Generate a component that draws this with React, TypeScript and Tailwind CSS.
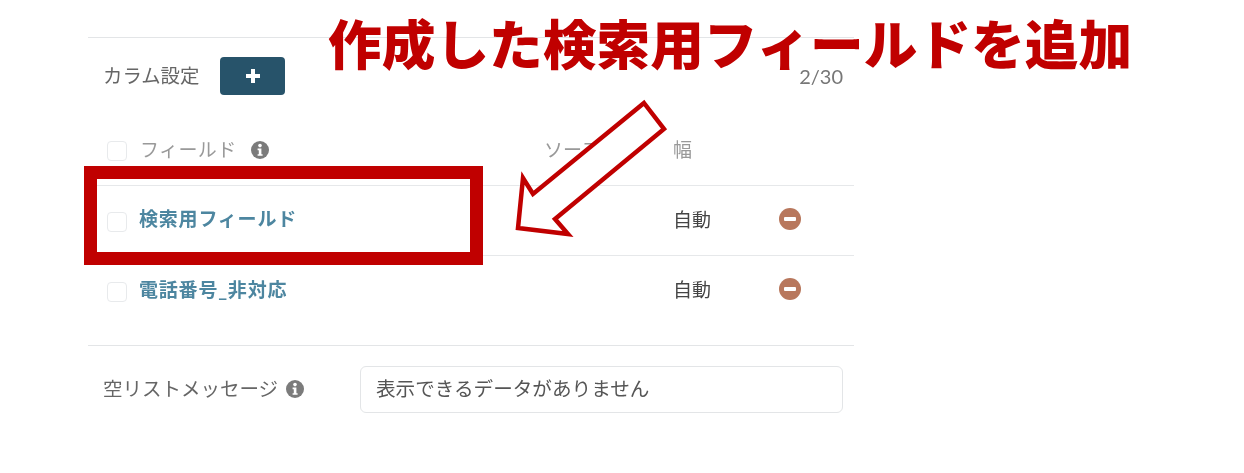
import React from "react";

const Info = ({ className }: { className: string }) => (
  <svg viewBox="0 0 18 18" className={className} fill="none">
    <circle cx="9" cy="9" r="9" fill="#7b7b7b" />
    <circle cx="9" cy="4.6" r="1.8" fill="#fff" />
    <path d="M6.6 7.6h3.8v5.6h1.2v1.6H6.6v-1.6h1.2V9.2H6.6z" fill="#fff" />
  </svg>
);

const Minus = () => (
  <span className="flex h-[22px] w-[22px] items-center justify-center rounded-full bg-[#b8775c]">
    <span className="h-[4px] w-[12px] rounded-[1px] bg-white" />
  </span>
);

const Check = () => <span className="mt-[2px] h-[20px] w-[20px] shrink-0 rounded-[4px] border border-[#e8eaec] bg-white" />;

const Row = ({ name, textClass }: { name: string; textClass: string }) => (
  <div className="flex h-[70px] items-center border-t border-[#e6e8ea]">
    <div className="flex w-[585px] items-center pl-[19px]">
      <Check />
      <span className={textClass}>{name}</span>
    </div>
    <span className="-mt-[1px] text-[19px] text-[#444]">自動</span>
    <span className="ml-[68px] -mt-[3px]">
      <Minus />
    </span>
  </div>
);

export default function App() {
  return (
    <div className="relative h-[473px] w-[1244px] overflow-hidden bg-white pl-[88px] pt-[37px] blur-[0.5px] font-['Lato','Noto_Sans_CJK_JP',sans-serif]">
      <div className="w-[766px] border-t border-[#e3e5e7]">
        <div className="flex h-[77px] items-center pl-[15px] pr-[11px]">
          <span className="-mt-[1px] text-[19.4px] text-[#666]">カラム設定</span>
          <button className="ml-[21px] -mt-[2px] flex h-[38px] w-[65px] items-center justify-center rounded-[4px] bg-[#27536a] text-white">
            <svg viewBox="0 0 16 16" className="h-[16px] w-[16px]" fill="none">
              <path d="M8 1v14M1 8h14" stroke="#fff" strokeWidth="4" />
            </svg>
          </button>
          <span className="ml-auto -mt-[2px] text-[20px] text-[#777]">2/30</span>
        </div>
        <div className="flex h-[70px] items-center">
          <div className="flex w-[456px] items-center pl-[19px]">
            <Check />
            <span className="ml-[13px] text-[19px] tracking-[0.4px] text-[#999]">フィールド</span>
            <Info className="ml-[14px] h-[18px] w-[18px]" />
          </div>
          <span className="w-[129px] text-[19px] text-[#999]">ソース</span>
          <span className="text-[19px] text-[#999]">幅</span>
        </div>
        <Row name="検索用フィールド" textClass="ml-[12px] -mt-[2px] text-[19px] font-bold tracking-[0.8px] text-[#4d86a0]" />
        <Row name="電話番号_非対応" textClass="ml-[12px] text-[19px] font-bold tracking-[0.8px] text-[#4d86a0]" />
        <div className="mt-[20px] flex h-[87px] items-center border-t border-[#e3e5e7] pl-[15px] pr-[11px]">
          <span className="w-[257px] shrink-0 text-[19.5px] text-[#666]">
            <span className="inline-flex items-center">
              空リストメッセージ
              <Info className="ml-[8px] h-[18px] w-[18px]" />
            </span>
          </span>
          <div className="flex h-[47px] flex-1 items-center rounded-[6px] border border-[#e3e5e7] px-[15px] text-[19.6px] text-[#555]">
            表示できるデータがありません
          </div>
        </div>
      </div>

      <div className="absolute left-[84px] top-[166px] h-[99px] w-[399px] border-[13px] border-[#c00000]" />
      <svg className="absolute left-0 top-0 h-[473px] w-[1244px]" viewBox="0 0 1244 473" fill="none">
        <polygon
          points="644,103 664,129 555,219 568,234 518,228 523,178 533,194"
          fill="#fff"
          stroke="#c00000"
          strokeWidth="4.5"
          strokeLinejoin="miter"
        />
      </svg>
      <div className="absolute left-[328px] top-[6px] whitespace-nowrap text-[53.7px] leading-[76px] font-black text-[#c00000]">
        作成した検索用フィールドを追加
      </div>
    </div>
  );
}
